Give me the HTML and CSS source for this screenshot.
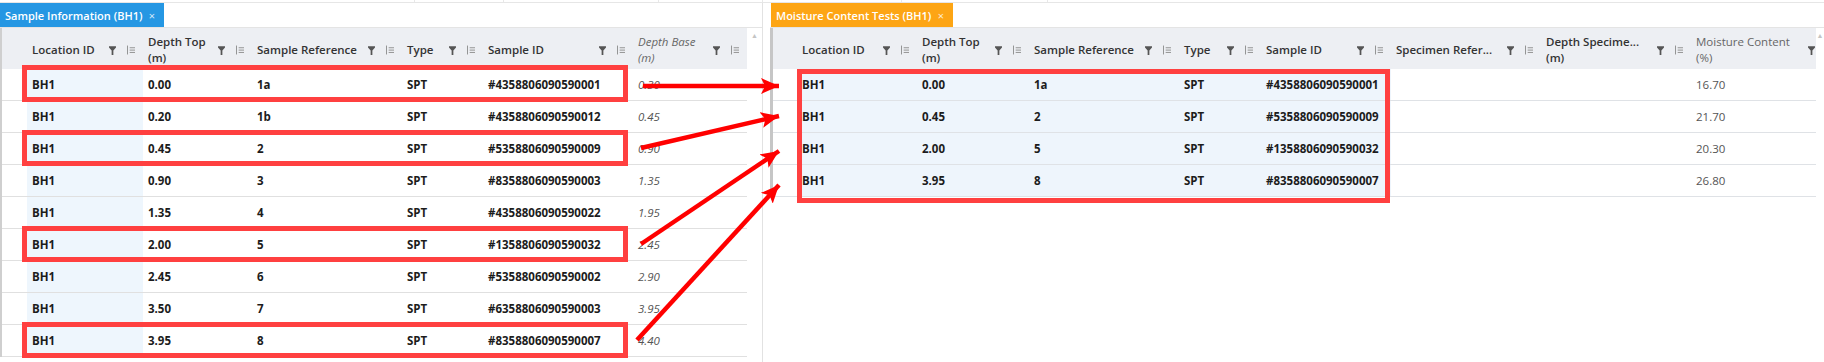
FILE: index.html
```html
<!DOCTYPE html>
<html lang="en">
<head>
<meta charset="utf-8">
<title>Sample Information / Moisture Content Tests</title>
<link rel="stylesheet" href="styles.css">
</head>
<body>
<div class="app">
  <div class="topstrip">
    <span class="tick t1"></span><span class="tick t2"></span><span class="tick t3"></span><span class="tick t4"></span><span class="tick t5"></span><span class="tick t6"></span>
  </div>
  <div class="panes">
    <!-- LEFT PANE -->
    <section class="pane pane-left">
      <div class="tabbar">
        <div class="tab tab-blue"><span class="tab-label">Sample Information (BH1)</span><span class="tab-x">×</span></div>
      </div>
      <div class="gridwrap">
        <div class="grid grid-left">
          <div class="hrow">
            <div class="gut"></div>
            <div class="hcell"><span class="hl">Location ID</span><svg class="ic-filter" viewBox="0 0 8 10"><path d="M0 0H8V1.6L5 5V10H3V5L0 1.6Z"/></svg><svg class="ic-menu" viewBox="0 0 9 10"><rect x="0" y="0" width="1" height="10"/><rect x="3" y="2" width="6" height="1"/><rect x="3" y="4.6" width="6" height="1"/><rect x="3" y="7.2" width="6" height="1"/></svg></div>
            <div class="hcell"><span class="hl">Depth Top<br>(m)</span><svg class="ic-filter" viewBox="0 0 8 10"><path d="M0 0H8V1.6L5 5V10H3V5L0 1.6Z"/></svg><svg class="ic-menu" viewBox="0 0 9 10"><rect x="0" y="0" width="1" height="10"/><rect x="3" y="2" width="6" height="1"/><rect x="3" y="4.6" width="6" height="1"/><rect x="3" y="7.2" width="6" height="1"/></svg></div>
            <div class="hcell"><span class="hl">Sample Reference</span><svg class="ic-filter" viewBox="0 0 8 10"><path d="M0 0H8V1.6L5 5V10H3V5L0 1.6Z"/></svg><svg class="ic-menu" viewBox="0 0 9 10"><rect x="0" y="0" width="1" height="10"/><rect x="3" y="2" width="6" height="1"/><rect x="3" y="4.6" width="6" height="1"/><rect x="3" y="7.2" width="6" height="1"/></svg></div>
            <div class="hcell"><span class="hl">Type</span><svg class="ic-filter" viewBox="0 0 8 10"><path d="M0 0H8V1.6L5 5V10H3V5L0 1.6Z"/></svg><svg class="ic-menu" viewBox="0 0 9 10"><rect x="0" y="0" width="1" height="10"/><rect x="3" y="2" width="6" height="1"/><rect x="3" y="4.6" width="6" height="1"/><rect x="3" y="7.2" width="6" height="1"/></svg></div>
            <div class="hcell"><span class="hl">Sample ID</span><svg class="ic-filter" viewBox="0 0 8 10"><path d="M0 0H8V1.6L5 5V10H3V5L0 1.6Z"/></svg><svg class="ic-menu" viewBox="0 0 9 10"><rect x="0" y="0" width="1" height="10"/><rect x="3" y="2" width="6" height="1"/><rect x="3" y="4.6" width="6" height="1"/><rect x="3" y="7.2" width="6" height="1"/></svg></div>
            <div class="hcell"><span class="hl hl-italic">Depth Base<br>(m)</span><svg class="ic-filter" viewBox="0 0 8 10"><path d="M0 0H8V1.6L5 5V10H3V5L0 1.6Z"/></svg><svg class="ic-menu" viewBox="0 0 9 10"><rect x="0" y="0" width="1" height="10"/><rect x="3" y="2" width="6" height="1"/><rect x="3" y="4.6" width="6" height="1"/><rect x="3" y="7.2" width="6" height="1"/></svg></div>
          </div>
          <div class="row"><div class="gut"></div><div class="c loc">BH1</div><div class="c">0.00</div><div class="c">1a</div><div class="c">SPT</div><div class="c">#4358806090590001</div><div class="c it">0.30</div></div>
          <div class="row"><div class="gut"></div><div class="c loc">BH1</div><div class="c">0.20</div><div class="c">1b</div><div class="c">SPT</div><div class="c">#4358806090590012</div><div class="c it">0.45</div></div>
          <div class="row"><div class="gut"></div><div class="c loc">BH1</div><div class="c">0.45</div><div class="c">2</div><div class="c">SPT</div><div class="c">#5358806090590009</div><div class="c it">0.90</div></div>
          <div class="row"><div class="gut"></div><div class="c loc">BH1</div><div class="c">0.90</div><div class="c">3</div><div class="c">SPT</div><div class="c">#8358806090590003</div><div class="c it">1.35</div></div>
          <div class="row"><div class="gut"></div><div class="c loc">BH1</div><div class="c">1.35</div><div class="c">4</div><div class="c">SPT</div><div class="c">#4358806090590022</div><div class="c it">1.95</div></div>
          <div class="row"><div class="gut"></div><div class="c loc">BH1</div><div class="c">2.00</div><div class="c">5</div><div class="c">SPT</div><div class="c">#1358806090590032</div><div class="c it">2.45</div></div>
          <div class="row"><div class="gut"></div><div class="c loc">BH1</div><div class="c">2.45</div><div class="c">6</div><div class="c">SPT</div><div class="c">#5358806090590002</div><div class="c it">2.90</div></div>
          <div class="row"><div class="gut"></div><div class="c loc">BH1</div><div class="c">3.50</div><div class="c">7</div><div class="c">SPT</div><div class="c">#6358806090590003</div><div class="c it">3.95</div></div>
          <div class="row"><div class="gut"></div><div class="c loc">BH1</div><div class="c">3.95</div><div class="c">8</div><div class="c">SPT</div><div class="c">#8358806090590007</div><div class="c it">4.40</div></div>
        </div>
        <div class="vscroll"><span class="up">▲</span></div>
      </div>
    </section>

    <!-- RIGHT PANE -->
    <section class="pane pane-right">
      <div class="tabbar">
        <div class="tab tab-orange"><span class="tab-label">Moisture Content Tests (BH1)</span><span class="tab-x">×</span></div>
      </div>
      <div class="gridwrap">
        <div class="grid grid-right">
          <div class="hrow">
            <div class="gut"></div>
            <div class="hcell"><span class="hl">Location ID</span><svg class="ic-filter" viewBox="0 0 8 10"><path d="M0 0H8V1.6L5 5V10H3V5L0 1.6Z"/></svg><svg class="ic-menu" viewBox="0 0 9 10"><rect x="0" y="0" width="1" height="10"/><rect x="3" y="2" width="6" height="1"/><rect x="3" y="4.6" width="6" height="1"/><rect x="3" y="7.2" width="6" height="1"/></svg></div>
            <div class="hcell"><span class="hl">Depth Top<br>(m)</span><svg class="ic-filter" viewBox="0 0 8 10"><path d="M0 0H8V1.6L5 5V10H3V5L0 1.6Z"/></svg><svg class="ic-menu" viewBox="0 0 9 10"><rect x="0" y="0" width="1" height="10"/><rect x="3" y="2" width="6" height="1"/><rect x="3" y="4.6" width="6" height="1"/><rect x="3" y="7.2" width="6" height="1"/></svg></div>
            <div class="hcell"><span class="hl">Sample Reference</span><svg class="ic-filter" viewBox="0 0 8 10"><path d="M0 0H8V1.6L5 5V10H3V5L0 1.6Z"/></svg><svg class="ic-menu" viewBox="0 0 9 10"><rect x="0" y="0" width="1" height="10"/><rect x="3" y="2" width="6" height="1"/><rect x="3" y="4.6" width="6" height="1"/><rect x="3" y="7.2" width="6" height="1"/></svg></div>
            <div class="hcell"><span class="hl">Type</span><svg class="ic-filter" viewBox="0 0 8 10"><path d="M0 0H8V1.6L5 5V10H3V5L0 1.6Z"/></svg><svg class="ic-menu" viewBox="0 0 9 10"><rect x="0" y="0" width="1" height="10"/><rect x="3" y="2" width="6" height="1"/><rect x="3" y="4.6" width="6" height="1"/><rect x="3" y="7.2" width="6" height="1"/></svg></div>
            <div class="hcell"><span class="hl">Sample ID</span><svg class="ic-filter" viewBox="0 0 8 10"><path d="M0 0H8V1.6L5 5V10H3V5L0 1.6Z"/></svg><svg class="ic-menu" viewBox="0 0 9 10"><rect x="0" y="0" width="1" height="10"/><rect x="3" y="2" width="6" height="1"/><rect x="3" y="4.6" width="6" height="1"/><rect x="3" y="7.2" width="6" height="1"/></svg></div>
            <div class="hcell"><span class="hl">Specimen Refer...</span><svg class="ic-filter" viewBox="0 0 8 10"><path d="M0 0H8V1.6L5 5V10H3V5L0 1.6Z"/></svg><svg class="ic-menu" viewBox="0 0 9 10"><rect x="0" y="0" width="1" height="10"/><rect x="3" y="2" width="6" height="1"/><rect x="3" y="4.6" width="6" height="1"/><rect x="3" y="7.2" width="6" height="1"/></svg></div>
            <div class="hcell"><span class="hl">Depth Specime...<br>(m)</span><svg class="ic-filter" viewBox="0 0 8 10"><path d="M0 0H8V1.6L5 5V10H3V5L0 1.6Z"/></svg><svg class="ic-menu" viewBox="0 0 9 10"><rect x="0" y="0" width="1" height="10"/><rect x="3" y="2" width="6" height="1"/><rect x="3" y="4.6" width="6" height="1"/><rect x="3" y="7.2" width="6" height="1"/></svg></div>
            <div class="hcell hcell-last"><span class="hl hl-light">Moisture Content<br>(%)</span><svg class="ic-filter" viewBox="0 0 8 10"><path d="M0 0H8V1.6L5 5V10H3V5L0 1.6Z"/></svg></div>
          </div>
          <div class="row"><div class="gut"></div><div class="c sel">BH1</div><div class="c sel">0.00</div><div class="c sel">1a</div><div class="c sel">SPT</div><div class="c sel">#4358806090590001</div><div class="c"></div><div class="c"></div><div class="c num">16.70</div></div>
          <div class="row"><div class="gut"></div><div class="c sel">BH1</div><div class="c sel">0.45</div><div class="c sel">2</div><div class="c sel">SPT</div><div class="c sel">#5358806090590009</div><div class="c"></div><div class="c"></div><div class="c num">21.70</div></div>
          <div class="row"><div class="gut"></div><div class="c sel">BH1</div><div class="c sel">2.00</div><div class="c sel">5</div><div class="c sel">SPT</div><div class="c sel">#1358806090590032</div><div class="c"></div><div class="c"></div><div class="c num">20.30</div></div>
          <div class="row"><div class="gut"></div><div class="c sel">BH1</div><div class="c sel">3.95</div><div class="c sel">8</div><div class="c sel">SPT</div><div class="c sel">#8358806090590007</div><div class="c"></div><div class="c"></div><div class="c num">26.80</div></div>
        </div>
        <div class="vscroll vscroll-right"><span class="up">▲</span></div>
      </div>
    </section>
  </div>

  <!-- annotations drawn over the screenshot -->
  <div class="overlay">
    <div class="rbox rb1"></div>
    <div class="rbox rb2"></div>
    <div class="rbox rb3"></div>
    <div class="rbox rb4"></div>
    <div class="rbox rb5"></div>
    <svg class="arrows" width="1824" height="362" viewBox="0 0 1824 362">
      <defs>
        <marker id="ah" markerUnits="userSpaceOnUse" markerWidth="20" markerHeight="16" refX="18" refY="8" orient="auto">
          <path d="M0 0L18 8L0 16L4 8Z" fill="#ff0000"/>
        </marker>
      </defs>
      <g stroke="#ff0000" stroke-width="4.5" fill="none" marker-end="url(#ah)">
        <line x1="643" y1="86" x2="779" y2="86"/>
        <line x1="641" y1="148" x2="779" y2="116"/>
        <line x1="641" y1="244" x2="779" y2="151"/>
        <line x1="637" y1="340" x2="779" y2="185"/>
      </g>
    </svg>
  </div>
</div>
</body>
</html>
```

FILE: styles.css
```css
* { box-sizing: border-box; }
html, body { margin: 0; padding: 0; background: #fff; }
body {
  width: 1824px;
  height: 362px;
  overflow: hidden;
  font-family: "Open Sans", "Noto Sans", sans-serif;
  font-size: 11.5px;
  color: #1c1c1c;
}
.app { position: relative; width: 1824px; height: 362px; }

/* thin strip at the very top */
.topstrip {
  height: 3px;
  display: flex;
  border-bottom: 1px solid #e6e6e6;
}
.tick { height: 2px; border-right: 1px solid #e8e8e8; }
.t1 { width: 415px; }
.t2 { width: 89px; }
.t3 { width: 155px; }
.t4 { width: 104px; }
.t5 { width: 139px; }
.t6 { width: 146px; }

.panes { display: flex; }
.pane { display: flex; flex-direction: column; }
.pane-left { width: 763px; border-right: 1px solid #e2e2e2; height: 359px; }
.pane-right { width: 1054px; margin-left: 7px; }

/* tabs */
.tabbar {
  height: 25px;
  display: flex;
  border-bottom: 1px solid #e4e4e4;
}
.tab {
  height: 24px;
  display: flex;
  align-items: center;
  padding: 0 9px 0 5px;
  color: #fff;
  font-size: 11px;
  font-weight: 600;
  white-space: nowrap;
}
.tab-blue { background: #2597e3; width: 164px; }
.tab-orange { background: #fda514; width: 182px; margin-left: 1px; }
.tab-x { margin-left: auto; font-size: 11px; font-weight: 400; opacity: .8; }

.gridwrap { display: flex; }

/* grid */
.grid-left {
  width: 747px;
  border-left: 2px solid #cfcfcf;
  --cols: 25px 116px 109px 150px 81px 150px 114px;
}
.grid-right {
  width: 1046px;
  border-left: 3px solid #c6c6c6;
  --cols: 24px 120px 112px 150px 82px 130px 150px 150px 125px;
}
.hrow, .row { display: grid; grid-template-columns: var(--cols); }
.hrow { height: 41px; background: #edeff3; }
.row { height: 32px; border-bottom: 1px solid #e0e0e0; }

.hcell {
  display: flex;
  align-items: center;
  padding: 3px 8px 0 5px;
  color: #333;
  font-weight: 600;
  min-width: 0;
  overflow: hidden;
}
.hl { flex: 1; min-width: 0; line-height: 16px; white-space: nowrap; }
.hl-italic { font-style: italic; font-weight: 400; color: #666; }
.hl-light { font-weight: 400; color: #666; }
.hcell-last { padding-right: 1px; }

.ic-filter { width: 7px; height: 9px; fill: #555; flex: none; margin-right: 11px; }
.hcell-last .ic-filter { margin-right: 0; }
.ic-menu { width: 8px; height: 10px; fill: #8a8a8a; flex: none; }

.c {
  display: flex;
  align-items: center;
  padding-left: 5px;
  font-weight: 700;
  white-space: nowrap;
  overflow: hidden;
}
.loc { background: #eef6fd; }
.sel { background: #eef5fc; }
.it { font-style: italic; font-weight: 400; color: #555; }
.num { font-weight: 400; color: #555; }

.grid-right .row { border-bottom-color: #dfe2e6; }

.vscroll { width: 15px; position: relative; }
.vscroll-right { width: 8px; }
.up {
  display: block;
  text-align: center;
  font-size: 7px;
  color: #c4c4c4;
  padding-top: 3px;
}

/* annotation overlay */
.overlay { position: absolute; left: 0; top: 0; width: 1824px; height: 362px; pointer-events: none; }
.rbox { position: absolute; border: 5px solid #ff4040; }
.rb1 { left: 22px; top: 65px; width: 606px; height: 37px; }
.rb2 { left: 22px; top: 130px; width: 606px; height: 36px; }
.rb3 { left: 22px; top: 226px; width: 606px; height: 36px; }
.rb4 { left: 22px; top: 322px; width: 606px; height: 36px; }
.rb5 { left: 797px; top: 69px; width: 593px; height: 134px; }
.arrows { position: absolute; left: 0; top: 0; }
```
